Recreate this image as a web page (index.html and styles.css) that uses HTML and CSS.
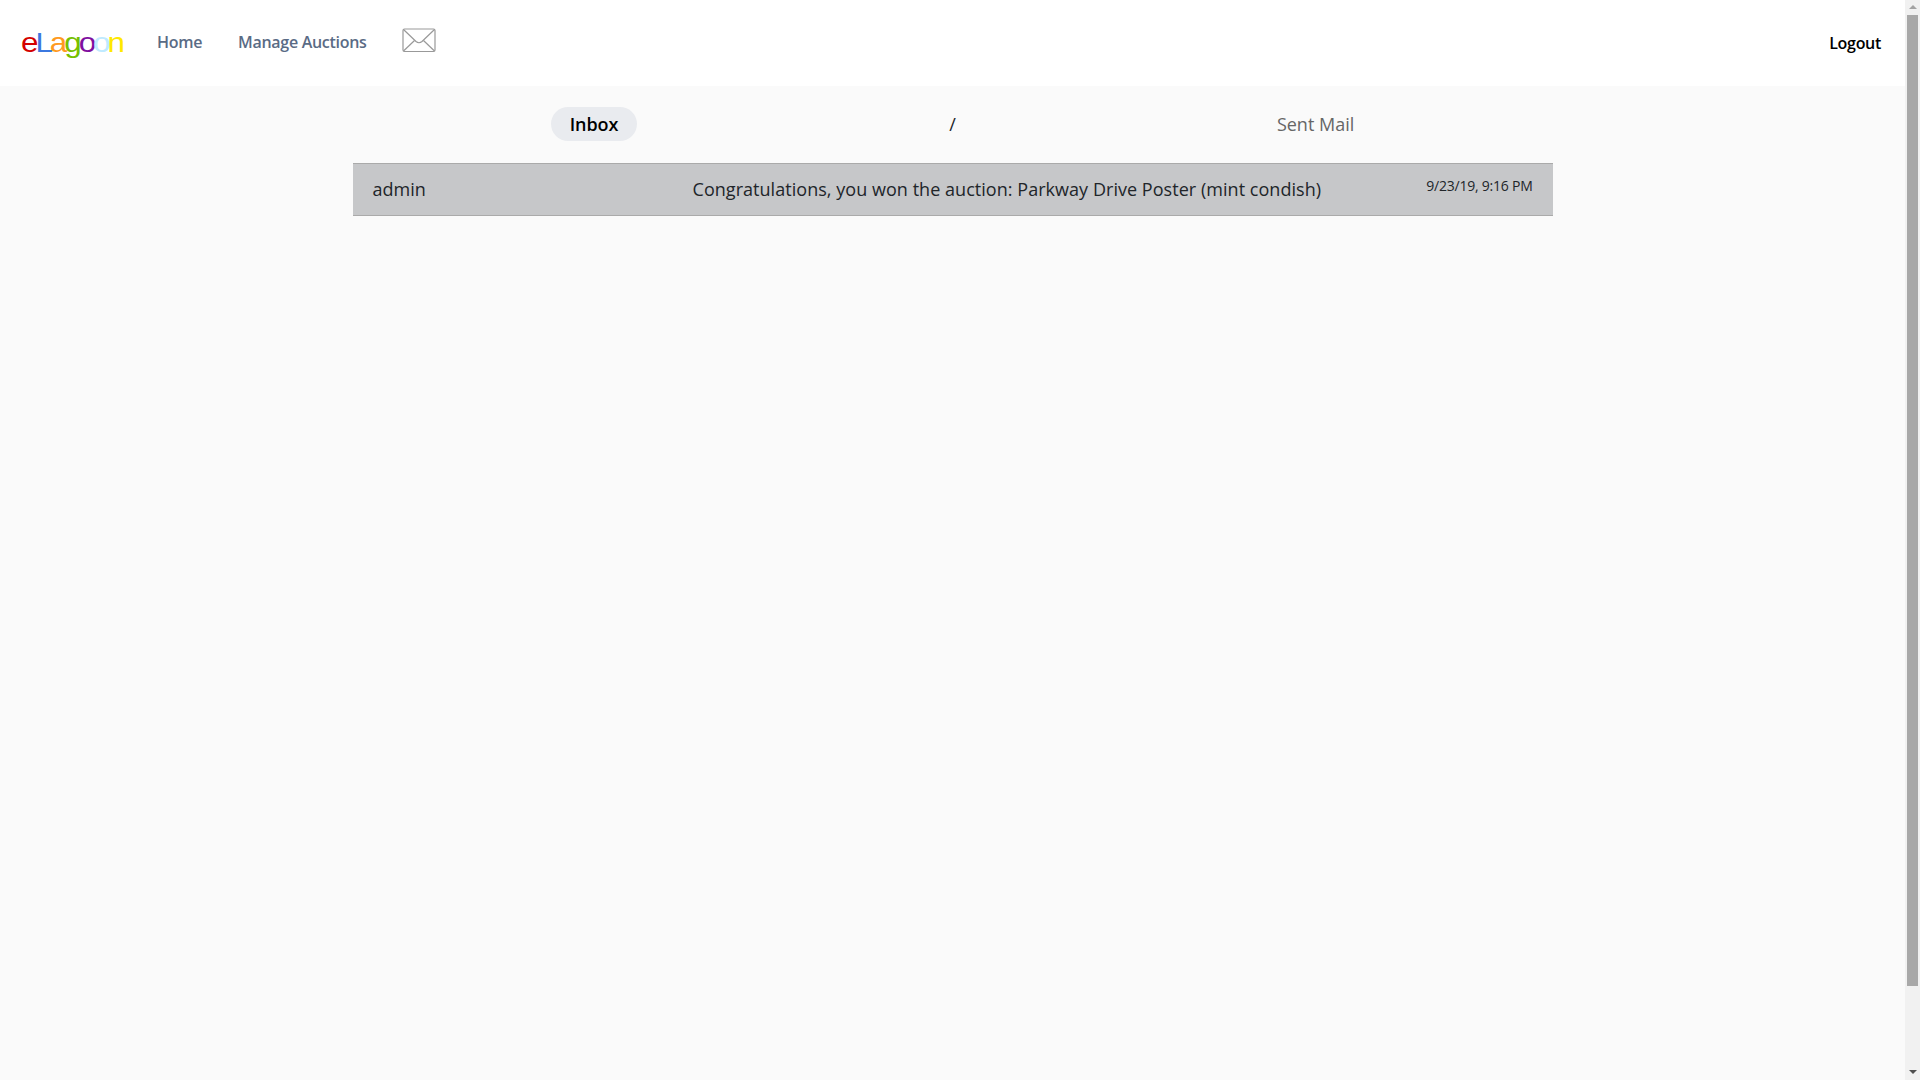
FILE: index.html
```html
<!DOCTYPE html>
<html>
<head>
  <title>eLagoon - Messages</title>
  <meta charset="UTF-8">
  <link rel="stylesheet" href="styles.css">
</head>
<body>
  <div class="page">
    <div class="navbar">
      <div class="logo-box">
        <div class="logo"><span class="red">e</span><span class="blue">L</span><span class="orange">a</span><span class="green">g</span><span class="purple">o</span><span class="sky">o</span><span class="yellow">n</span></div>
      </div>
      <a class="nav-link" href="#">Home</a>
      <a class="nav-link" href="#">Manage Auctions</a>
      <a class="mail-link" href="#">
        <svg width="35" height="25" viewBox="0 0 35 25" fill="none" stroke="#999" stroke-width="1.2">
          <rect x="1" y="1" width="32" height="22.5" rx="1.5"/>
          <path d="M1.5 1.5 L14 13.5 Q17 16 20 13.5 L32.5 1.5"/>
          <path d="M1.5 23 L12.5 12.5"/>
          <path d="M32.5 23 L21.5 12.5"/>
        </svg>
      </a>
      <a class="logout" href="#">Logout</a>
    </div>

    <div class="content">
      <div class="tabs">
        <a class="tab active" href="#">Inbox</a>
        <span class="tab-sep">/</span>
        <a class="tab" href="#">Sent Mail</a>
      </div>
      <div class="message">
        <div class="sender">admin</div>
        <div class="subject">Congratulations, you won the auction: Parkway Drive Poster (mint condish)</div>
        <div class="date">9/23/19, 9:16 PM</div>
      </div>
    </div>
  </div>

  <div class="scrollbar">
    <div class="arrow-up"></div>
    <div class="thumb"></div>
    <div class="arrow-down"></div>
  </div>
</body>
</html>
```

FILE: styles.css
```css
html, body {
  height: 100%;
}

body {
  display: flex;
  margin: 0;
  overflow: hidden;
  background-color: #fafafa;
  font-family: "Open Sans", sans-serif;
  color: #212529;
}

a {
  text-decoration: none;
}

.page {
  flex: 1;
  min-width: 0;
}

.navbar {
  display: flex;
  align-items: center;
  height: 86px;
  padding-left: 21px;
  padding-right: 24px;
  background-color: #fff;
}

.logo-box {
  width: 136px;
}

.logo {
  font-family: "Liberation Sans", sans-serif;
  font-size: 28px;
  letter-spacing: -2.7px;
  transform: scaleX(1.12);
  transform-origin: left center;
}

.red { color: #d40000; }
.blue { color: #3b78e0; }
.orange { color: #ff9a1f; }
.green { color: #76c000; }
.purple { color: #800f9f; }
.sky { color: #bfeaff; }
.yellow { color: #ffe800; }

.nav-link {
  margin-right: 36px;
  margin-bottom: 2px;
  font-size: 16px;
  font-weight: 600;
  letter-spacing: -0.3px;
  color: #5a6b85;
}

.mail-link {
  display: flex;
  margin-left: -1px;
  margin-bottom: 5px;
}

.logout {
  margin-left: auto;
  font-size: 16px;
  font-weight: 600;
  letter-spacing: -0.3px;
  color: #000;
}

.content {
  width: 1200px;
  margin: 0 auto;
}

.tabs {
  display: flex;
  justify-content: center;
  align-items: center;
  height: 34px;
  margin-top: 21px;
  font-size: 18px;
}

.tab {
  color: #666;
}

.tab.active {
  padding: 0 19px;
  line-height: 34px;
  border-radius: 17px;
  background-color: #e9ebef;
  font-weight: 600;
  letter-spacing: -0.1px;
  color: #000;
}

.tab-sep {
  margin-left: 312px;
  margin-right: 321px;
  color: #212529;
}

.message {
  display: flex;
  align-items: center;
  height: 51px;
  margin-top: 22px;
  padding: 0 20px;
  border-top: 1px solid #aaa;
  border-bottom: 1px solid #aaa;
  background-color: #c6c7c9;
  font-size: 18px;
}

.sender {
  width: 320px;
  margin-bottom: 2px;
}

.subject {
  flex: 1;
  margin-bottom: 2px;
  letter-spacing: 0.04px;
}

.date {
  margin-bottom: 9px;
  font-size: 14px;
  letter-spacing: -0.23px;
}

.scrollbar {
  display: flex;
  flex-direction: column;
  align-items: center;
  flex-shrink: 0;
  width: 15px;
  height: 100%;
  background-color: #f1f1f1;
}

.arrow-up {
  width: 0;
  height: 0;
  margin-top: 5px;
  margin-bottom: 6px;
  border-left: 4px solid transparent;
  border-right: 4px solid transparent;
  border-bottom: 4px solid #a3a3a3;
}

.thumb {
  width: 11px;
  height: 971px;
  background-color: #a8a8a8;
}

.arrow-down {
  width: 0;
  height: 0;
  margin-top: 84px;
  border-left: 4px solid transparent;
  border-right: 4px solid transparent;
  border-top: 4px solid #505050;
}
```
